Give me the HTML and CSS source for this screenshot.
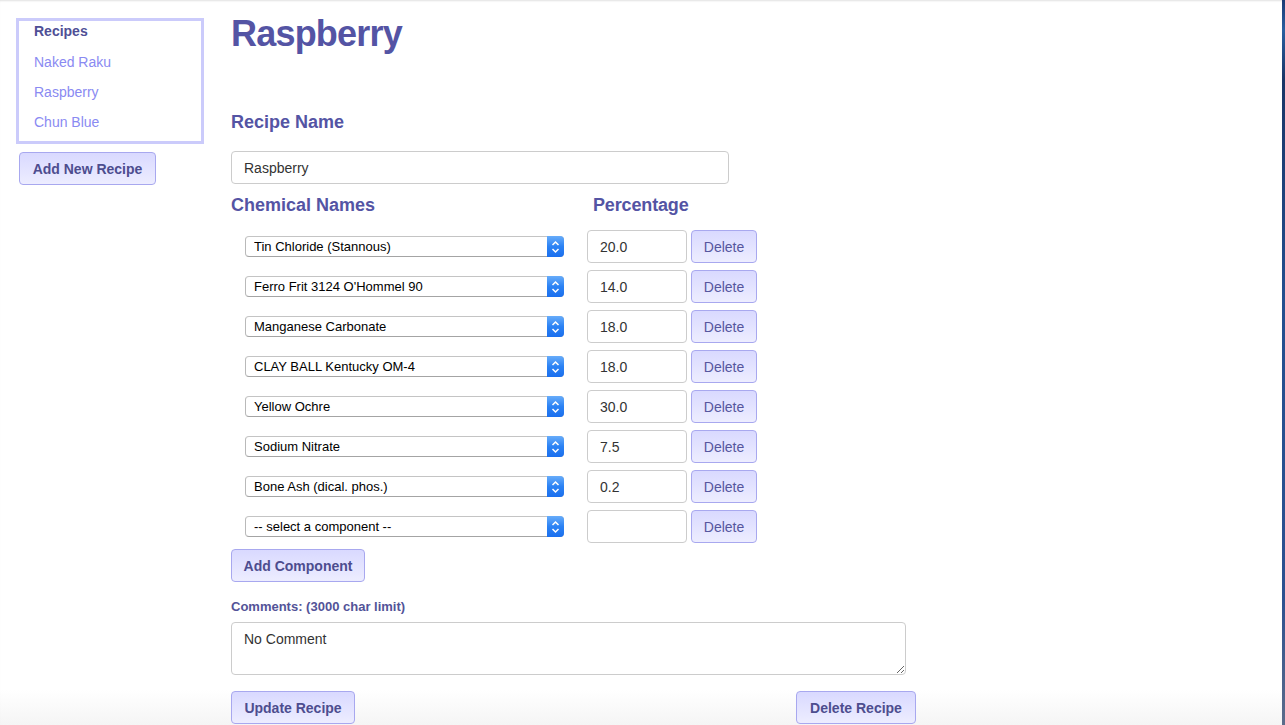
FILE: index.html
```html
<!DOCTYPE html>
<html lang="en">
<head>
<meta charset="utf-8">
<title>Raspberry</title>
<link rel="stylesheet" href="styles.css">
</head>
<body>
<div class="window">
  <div class="page">
    <aside class="sidebar">
      <nav class="recipe-list">
        <div class="list-title">Recipes</div>
        <a class="list-link" href="#">Naked Raku</a>
        <a class="list-link" href="#">Raspberry</a>
        <a class="list-link" href="#">Chun Blue</a>
      </nav>
      <button class="btn btn-new">Add New Recipe</button>
    </aside>
    <main class="main">
      <h1 class="title">Raspberry</h1>
      <h2 class="section-label">Recipe Name</h2>
      <input class="text-input name-input" type="text" value="Raspberry">
      <div class="col-heads">
        <h2 class="section-label col-chem">Chemical Names</h2>
        <h2 class="section-label">Percentage</h2>
      </div>
      <div class="rows">
        <div class="row">
          <div class="select-wrap"><select class="select"><option>Tin Chloride (Stannous)</option></select><span class="select-arrow"><svg width="9" height="14" viewBox="0 0 9 14"><path d="M1.5 5 L4.5 2 L7.5 5 M1.5 9 L4.5 12 L7.5 9" fill="none" stroke="#fff" stroke-width="1.5"/></svg></span></div>
          <input class="text-input pct" type="text" value="20.0">
          <button class="btn btn-del">Delete</button>
        </div>
        <div class="row">
          <div class="select-wrap"><select class="select"><option>Ferro Frit 3124 O'Hommel 90</option></select><span class="select-arrow"><svg width="9" height="14" viewBox="0 0 9 14"><path d="M1.5 5 L4.5 2 L7.5 5 M1.5 9 L4.5 12 L7.5 9" fill="none" stroke="#fff" stroke-width="1.5"/></svg></span></div>
          <input class="text-input pct" type="text" value="14.0">
          <button class="btn btn-del">Delete</button>
        </div>
        <div class="row">
          <div class="select-wrap"><select class="select"><option>Manganese Carbonate</option></select><span class="select-arrow"><svg width="9" height="14" viewBox="0 0 9 14"><path d="M1.5 5 L4.5 2 L7.5 5 M1.5 9 L4.5 12 L7.5 9" fill="none" stroke="#fff" stroke-width="1.5"/></svg></span></div>
          <input class="text-input pct" type="text" value="18.0">
          <button class="btn btn-del">Delete</button>
        </div>
        <div class="row">
          <div class="select-wrap"><select class="select"><option>CLAY BALL Kentucky OM-4</option></select><span class="select-arrow"><svg width="9" height="14" viewBox="0 0 9 14"><path d="M1.5 5 L4.5 2 L7.5 5 M1.5 9 L4.5 12 L7.5 9" fill="none" stroke="#fff" stroke-width="1.5"/></svg></span></div>
          <input class="text-input pct" type="text" value="18.0">
          <button class="btn btn-del">Delete</button>
        </div>
        <div class="row">
          <div class="select-wrap"><select class="select"><option>Yellow Ochre</option></select><span class="select-arrow"><svg width="9" height="14" viewBox="0 0 9 14"><path d="M1.5 5 L4.5 2 L7.5 5 M1.5 9 L4.5 12 L7.5 9" fill="none" stroke="#fff" stroke-width="1.5"/></svg></span></div>
          <input class="text-input pct" type="text" value="30.0">
          <button class="btn btn-del">Delete</button>
        </div>
        <div class="row">
          <div class="select-wrap"><select class="select"><option>Sodium Nitrate</option></select><span class="select-arrow"><svg width="9" height="14" viewBox="0 0 9 14"><path d="M1.5 5 L4.5 2 L7.5 5 M1.5 9 L4.5 12 L7.5 9" fill="none" stroke="#fff" stroke-width="1.5"/></svg></span></div>
          <input class="text-input pct" type="text" value="7.5">
          <button class="btn btn-del">Delete</button>
        </div>
        <div class="row">
          <div class="select-wrap"><select class="select"><option>Bone Ash (dical. phos.)</option></select><span class="select-arrow"><svg width="9" height="14" viewBox="0 0 9 14"><path d="M1.5 5 L4.5 2 L7.5 5 M1.5 9 L4.5 12 L7.5 9" fill="none" stroke="#fff" stroke-width="1.5"/></svg></span></div>
          <input class="text-input pct" type="text" value="0.2">
          <button class="btn btn-del">Delete</button>
        </div>
        <div class="row">
          <div class="select-wrap"><select class="select"><option>-- select a component --</option></select><span class="select-arrow"><svg width="9" height="14" viewBox="0 0 9 14"><path d="M1.5 5 L4.5 2 L7.5 5 M1.5 9 L4.5 12 L7.5 9" fill="none" stroke="#fff" stroke-width="1.5"/></svg></span></div>
          <input class="text-input pct" type="text" value="">
          <button class="btn btn-del">Delete</button>
        </div>
      </div>
      <button class="btn btn-add">Add Component</button>
      <label class="comments-label">Comments: (3000 char limit)</label>
      <textarea class="comments">No Comment</textarea>
      <div class="actions">
        <button class="btn btn-action">Update Recipe</button>
        <button class="btn btn-action">Delete Recipe</button>
      </div>
    </main>
  </div>
  <div class="desktop-edge"></div>
</div>
</body>
</html>
```

FILE: styles.css
```css
* { box-sizing: border-box; }

html, body {
  margin: 0;
  padding: 0;
  height: 725px;
  overflow: hidden;
  font-family: "Liberation Sans", Arial, Helvetica, sans-serif;
}

.window {
  display: flex;
  height: 725px;
}

.page {
  flex: 1;
  display: flex;
  align-items: flex-start;
  background: linear-gradient(to bottom, #ffffff 0, #ffffff 690px, #f5f5f5 725px);
  box-shadow: inset 0 2px 2px -1px rgba(0, 0, 0, 0.12);
}

.desktop-edge {
  width: 3px;
  background: linear-gradient(to bottom, #1b3a74 0, #2a5fa0 30px, #1a3566 80px, #244f8f 300px, #2d5190 600px, #5c6c8a 725px);
}

/* Sidebar */
.sidebar {
  width: 231px;
  padding: 18px 0 0 16px;
  display: flex;
  flex-direction: column;
  align-items: flex-start;
}

.recipe-list {
  width: 188px;
  border: 3px solid #cbcbfb;
  padding: 0 12px 9px 15px;
  display: flex;
  flex-direction: column;
  gap: 10px;
}

.list-title {
  font-size: 14px;
  line-height: 20px;
  font-weight: bold;
  color: #4f4f96;
  margin-bottom: 1px;
}

.list-link {
  font-size: 14px;
  line-height: 20px;
  color: #8a8af2;
  text-decoration: none;
}

/* Buttons */
.btn {
  font-family: "Liberation Sans", Arial, Helvetica, sans-serif;
  background: linear-gradient(to bottom, #d9d9ff 0%, #ededff 100%);
  border: 1px solid #a8a8ef;
  border-radius: 4px;
  color: #4d4d8f;
  font-size: 14px;
  font-weight: bold;
  height: 33px;
  padding: 0 8px;
  white-space: nowrap;
  cursor: pointer;
}

.btn-new {
  margin: 8px 0 0 3px;
  width: 137px;
}

/* Main */
.main {
  width: 700px;
  padding-top: 16px;
  display: flex;
  flex-direction: column;
  align-items: flex-start;
}

.title {
  margin: 0;
  font-size: 36px;
  line-height: 36px;
  font-weight: bold;
  color: #5454a4;
  letter-spacing: -0.8px;
}

.section-label {
  margin: 0;
  font-size: 18px;
  line-height: 20px;
  font-weight: bold;
  color: #5454a4;
}

.title + .section-label {
  margin-top: 60px;
}

.text-input {
  font-family: "Liberation Sans", Arial, Helvetica, sans-serif;
  font-size: 14px;
  color: #333;
  border: 1px solid #cccccc;
  border-radius: 4px;
  background: #fff;
  height: 33px;
  padding: 0 12px;
  outline: none;
}

.name-input {
  margin-top: 19px;
  width: 498px;
}

.col-heads {
  margin-top: 11px;
  display: flex;
}

.col-chem {
  width: 362px;
}

.col-heads .section-label:last-child {
  letter-spacing: -0.15px;
}

.rows {
  margin-top: 15px;
  display: flex;
  flex-direction: column;
  gap: 7px;
}

.row {
  display: flex;
  align-items: center;
  padding-left: 14px;
}

.select-wrap {
  position: relative;
  width: 319px;
  height: 21px;
}

.select {
  appearance: none;
  -webkit-appearance: none;
  width: 100%;
  height: 21px;
  font-family: "Liberation Sans", Arial, Helvetica, sans-serif;
  font-size: 13px;
  color: #000;
  background: #fff;
  border: 1px solid #b9b9b9;
  border-top-color: #c4c4c4;
  border-bottom-color: #a4a4a4;
  border-radius: 4px;
  padding: 0 24px 0 8px;
  outline: none;
}

.select-arrow {
  position: absolute;
  right: 0;
  top: 0;
  width: 17px;
  height: 21px;
  border-radius: 0 4px 4px 0;
  background: linear-gradient(to bottom, #67acfa 0%, #2b82f4 50%, #1b6fee 100%);
  display: flex;
  align-items: center;
  justify-content: center;
}

.pct {
  margin-left: 23px;
  width: 100px;
}

.btn-del {
  margin-left: 4px;
  width: 66px;
  padding: 0;
  font-weight: normal;
  color: #56569e;
}

.btn-add {
  margin-top: 6px;
  width: 134px;
}

.comments-label {
  margin-top: 17px;
  font-size: 13px;
  line-height: 15px;
  font-weight: bold;
  color: #535398;
}

.comments {
  margin-top: 8px;
  width: 675px;
  height: 53px;
  font-family: "Liberation Sans", Arial, Helvetica, sans-serif;
  font-size: 14px;
  color: #333;
  border: 1px solid #cccccc;
  border-radius: 4px;
  padding: 8px 12px;
  resize: vertical;
  outline: none;
}

.actions {
  margin-top: 16px;
  width: 685px;
  display: flex;
  justify-content: space-between;
}

.btn-action:first-child { width: 124px; }
.btn-action:last-child { width: 120px; }
```
